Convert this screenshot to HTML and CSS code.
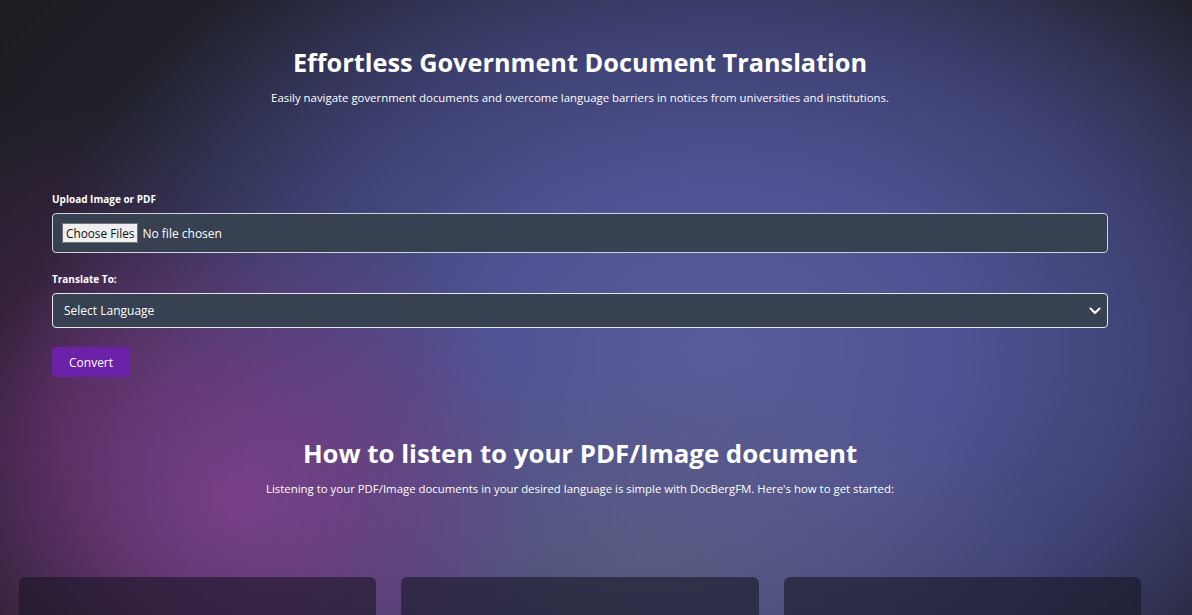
FILE: index.html
```html
<!DOCTYPE html>
<html lang="en">
<head>
<meta charset="utf-8">
<title>DocBergFM</title>
<link rel="stylesheet" href="styles.css">
</head>
<body>
<div class="page">
  <header class="hero">
    <h1 class="hero-title">Effortless Government Document Translation</h1>
    <p class="hero-sub">Easily navigate government documents and overcome language barriers in notices from universities and institutions.</p>
  </header>

  <form class="form">
    <label class="label" for="file">Upload Image or PDF</label>
    <input class="file-input" id="file" type="file" multiple>

    <label class="label label-second" for="lang">Translate To:</label>
    <div class="select-wrap">
      <select class="select" id="lang">
        <option>Select Language</option>
      </select>
      <svg class="chevron" width="12" height="8" viewBox="0 0 12 8"><path d="M1.5 1.5 6 6l4.5-4.5" fill="none" stroke="#fff" stroke-width="2" stroke-linecap="round" stroke-linejoin="round"/></svg>
    </div>

    <button class="convert" type="button">Convert</button>
  </form>

  <section class="how">
    <h2 class="how-title">How to listen to your PDF/Image document</h2>
    <p class="how-sub">Listening to your PDF/Image documents in your desired language is simple with DocBergFM. Here's how to get started:</p>
  </section>

  <section class="cards">
    <div class="card"></div>
    <div class="card"></div>
    <div class="card"></div>
  </section>
</div>
</body>
</html>
```

FILE: styles.css
```css
* { box-sizing: border-box; }

html, body {
  margin: 0;
  height: 100%;
}

body {
  font-family: "Open Sans", "Noto Sans", sans-serif;
  color: #fff;
  overflow: hidden;
  background-color: #1c1c20;
  background-image:
    radial-gradient(ellipse 300px 300px at 240px 500px, rgba(128, 64, 140, 0.9) 0%, rgba(122, 62, 136, 0.6) 45%, rgba(122, 62, 136, 0) 100%),
    radial-gradient(ellipse 220px 320px at 60px 420px, rgba(95, 38, 95, 0.6), rgba(95, 38, 95, 0) 100%),
    radial-gradient(ellipse 420px 200px at 640px 560px, rgba(95, 95, 125, 0.7), rgba(95, 95, 125, 0) 100%),
    radial-gradient(ellipse 700px 500px at 720px 350px, #5a5d9a 0%, #4f5292 35%, #3d4070 65%, rgba(30, 30, 42, 0) 100%),
    radial-gradient(ellipse 820px 640px at 620px 360px, #2a2b44 0%, #1c1c20 100%);
}

.page {
  width: 1160px;
}

.hero {
  padding-top: 44px;
  text-align: center;
}

.hero-title {
  margin: 0;
  font-size: 25.3px;
  line-height: 36px;
  font-weight: 700;
}

.hero-sub {
  margin: 9px 0 0;
  font-size: 11.4px;
  line-height: 18px;
}

.form {
  margin-top: 84px;
  padding: 0 52px;
  display: flex;
  flex-direction: column;
  align-items: flex-start;
}

.label {
  font-size: 10px;
  line-height: 16px;
  font-weight: 700;
  margin-bottom: 6px;
}

.label-second {
  margin-top: 18px;
}

.file-input {
  width: 100%;
  height: 40px;
  padding: 9px 9px;
  background: #374151;
  border: 1px solid #d1d5db;
  border-radius: 4px;
  color: #fff;
  font-family: "Open Sans", "Noto Sans", sans-serif;
  font-size: 12px;
  line-height: 20px;
}

.file-input::file-selector-button {
  font-family: "Open Sans", "Noto Sans", sans-serif;
  font-size: 11.8px;
  height: 20px;
  padding: 0 3px;
  margin-right: 4px;
  background: #efefef;
  border: 1px solid #767676;
  border-radius: 0;
  color: #111;
}

.select-wrap {
  position: relative;
  width: 100%;
}

.select {
  width: 100%;
  height: 35px;
  padding: 0 11px;
  appearance: none;
  background: #374151;
  border: 1px solid #e5e7eb;
  border-radius: 4px;
  color: #fff;
  font-family: "Open Sans", "Noto Sans", sans-serif;
  font-size: 12px;
}

.chevron {
  position: absolute;
  right: 7px;
  top: 14px;
}

.convert {
  margin-top: 19px;
  height: 30px;
  padding: 0 17px;
  background: #6b21a8;
  border: none;
  border-radius: 4px;
  color: #fff;
  font-family: "Open Sans", "Noto Sans", sans-serif;
  font-size: 12px;
}

.how {
  margin-top: 58px;
  text-align: center;
}

.how-title {
  margin: 0;
  font-size: 25.8px;
  line-height: 36px;
  font-weight: 700;
}

.how-sub {
  margin: 9px 0 0;
  font-size: 11.4px;
  line-height: 18px;
}

.cards {
  margin-top: 79px;
  padding: 0 19px;
  display: grid;
  grid-template-columns: repeat(3, 1fr);
  gap: 25px;
}

.card {
  height: 200px;
  border-radius: 6px;
  background: rgba(22, 20, 34, 0.58);
}
```
